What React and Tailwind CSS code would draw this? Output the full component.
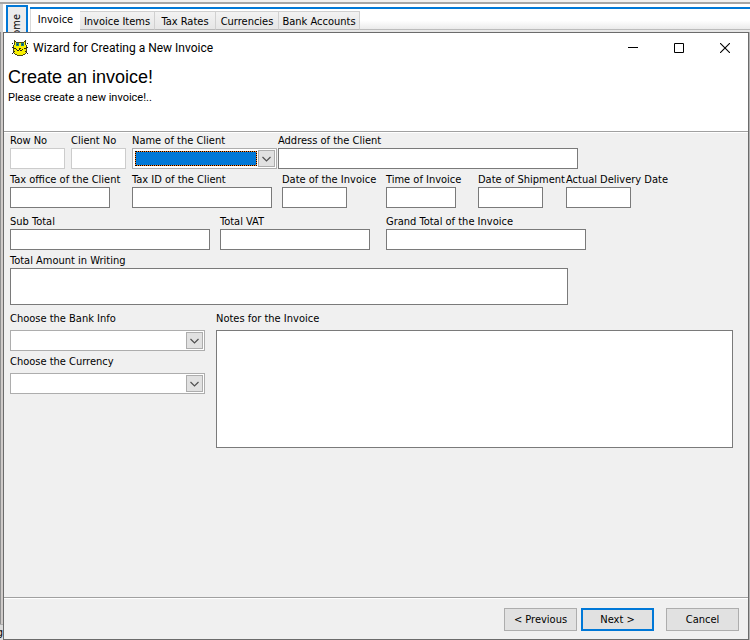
import { useState } from "react";

const tabs = ["Invoice Items", "Tax Rates", "Currencies", "Bank Accounts"];
const tabWidths = {
	"Invoice Items": "w-[75px]",
	"Tax Rates": "w-[61px]",
	Currencies: "w-[63px]",
	"Bank Accounts": "w-[81px]",
};

function CatIcon() {
	return (
		<svg width="16" height="16" viewBox="0 0 16 16" shapeRendering="crispEdges" aria-hidden="true">
			<path d="M2 0h1v1h1v1h8V1h1V0h1v5h1v8h-1v1h-1v1h-2v1H5v-1H3v-1H2v-1H1V5h1z" fill="#4a4a18" />
			<path d="M3 2h1v1h8V2h1v3h1v8h-1v1h-2v1H5v-1H3v-1H2V5h1z" fill="#f8f000" />
			<path d="M4 3h3v3H4zM9 3h3v3H9z" fill="#16808c" />
			<path d="M5 4h1v1H5zM10 4h1v1h-1z" fill="#0a3c50" />
			<path
				d="M0 3h1v1H0zM15 3h1v1h-1zM0 7h2v1H0zM2 8h2v1H2zM14 7h2v1h-2zM12 8h2v1h-2zM0 13h1v1H0zM1 12h1v1H1zM15 13h1v1h-1zM14 12h1v1h-1zM2 11h1v1H2zM13 11h1v1h-1zM7 8h2v1H7zM7 9h1v1H7zM5 10h2v1H5zM8 10h2v1H8zM10 9h1v1h-1zM4 9h1v1H4z"
				fill="#222"
			/>
		</svg>
	);
}

function Field({ id, label, width, disabled, value, onChange }) {
	return (
		<div>
			<label htmlFor={id} className="block h-[15px] leading-[15px] whitespace-nowrap">
				{label}
			</label>
			<input
				id={id}
				name={id}
				type="text"
				disabled={disabled}
				value={value || ""}
				onChange={onChange}
				className={`block h-[21px] max-w-full border bg-white px-1 outline-none ${width} ${
					disabled ? "border-[#cccccc]" : "border-[#7a7a7a]"
				}`}
			/>
		</div>
	);
}

function Combo({ id, label, width, labelGap, selected }) {
	return (
		<div>
			<label htmlFor={id} className={`block h-[15px] leading-[15px] whitespace-nowrap ${labelGap || ""}`}>
				{label}
			</label>
			<div className={`flex h-[21px] border border-[#adadad] bg-white p-px ${width}`}>
				<div className={`flex flex-1 ${selected ? "m-px bg-[#ff8728]" : ""}`}>
					<select
						id={id}
						name={id}
						className={`w-full appearance-none outline-none ${
							selected ? "border border-dotted border-black bg-[#0078d7] bg-clip-padding" : "bg-white"
						}`}
					>
						<option value=""></option>
					</select>
				</div>
				<span className="pointer-events-none flex w-[17px] items-center justify-center border border-[#adadad] bg-[#e1e1e1]">
					<svg width="9" height="6" viewBox="0 0 9 6" fill="none" stroke="#505050" strokeWidth="1.2">
						<path d="M0.5 1l4 4 4-4" />
					</svg>
				</span>
			</div>
		</div>
	);
}

export default function App() {
	const [formData, setFormData] = useState({});

	const handleChange = (e) => {
		setFormData({ ...formData, [e.target.name]: e.target.value });
	};

	const bind = (id) => ({ id, value: formData[id], onChange: handleChange });

	return (
		<div className="flex min-h-screen flex-col bg-[#b4b4b4] font-['DejaVu_Sans_Condensed','DejaVu_Sans',sans-serif] text-[11px] text-black">
			{/* main window behind the wizard */}
			<div className="flex h-8 flex-col overflow-hidden bg-[#f0f0f0]">
				<div className="mt-[2px] h-[2px] shrink-0 bg-[#a5a5a5]" />
				<div className="flex flex-1 border-l-[3px] border-[#cfcfcf] bg-white pt-px pl-[3px]">
					<button
						type="button"
						className="flex h-10 w-[22px] shrink-0 items-center justify-center border-2 border-[#0078d7] bg-[#ececec]"
					>
						<span className="mt-2 rotate-180 [writing-mode:vertical-rl]">Home</span>
					</button>
					<div className="mt-[2px] ml-[2px] flex flex-1 flex-col border-t-2 border-[#0078d7]">
						<nav className="flex h-[23px] items-start bg-linear-to-b from-white via-white to-[#e4e4e4]">
							<button type="button" className="h-[23px] w-[50px] border-l border-[#d9d9d9] bg-white pb-px">
								Invoice
							</button>
							{tabs.map((tab) => (
								<button
									key={tab}
									type="button"
									className={`mt-[2px] h-[19px] border-t border-r border-b border-[#d0d0d0] border-b-[#b8b8b8] bg-linear-to-b from-[#f2f2f2] to-[#e6e6e6] pt-[2px] whitespace-nowrap ${tabWidths[tab]}`}
								>
									{tab}
								</button>
							))}
							<div className="mt-5 h-px flex-1 bg-[#bcbcbc]" />
						</nav>
					</div>
				</div>
			</div>

			<div className="flex flex-1">
				<div className="flex w-[3px] flex-col overflow-hidden bg-[#dcdcdc]">
					<div className="flex-1 border-l border-[#8f8f8f] bg-[#cfcbc9]" />
					<div className="flex h-4 justify-end border-t border-[#b0b0b0] leading-4">g</div>
				</div>

				<section
					role="dialog"
					aria-labelledby="wizard-title"
					className="mr-px flex flex-1 flex-col border border-[#6b6b6b] bg-[#f0f0f0]"
				>
					<header className="h-[99px] border-b border-[#a0a0a0] bg-white">
						<div className="flex h-[30px] items-center">
							<div className="flex flex-1 items-center gap-[5px] pl-2">
								<CatIcon />
								<h1 id="wizard-title" className="font-[Roboto,sans-serif] text-[12px]">
									Wizard for Creating a New Invoice
								</h1>
							</div>
							<button type="button" aria-label="Minimize" className="flex h-full w-[46px] items-center justify-center">
								<svg width="10" height="10" shapeRendering="crispEdges">
									<path d="M0 4h10v1H0z" />
								</svg>
							</button>
							<button type="button" aria-label="Maximize" className="flex h-full w-[46px] items-center justify-center">
								<svg width="10" height="10" fill="none" stroke="#000">
									<path d="M0.5 0.5h9v9h-9z" />
								</svg>
							</button>
							<button type="button" aria-label="Close" className="flex h-full w-[46px] items-center justify-center">
								<svg width="10" height="10" fill="none" stroke="#000" strokeWidth="1.1">
									<path d="M0 0l10 10M10 0L0 10" />
								</svg>
							</button>
						</div>
						<div className="pt-1 pl-1">
							<h2 className="font-['Liberation_Sans',sans-serif] text-[18px] leading-5">Create an invoice!</h2>
							<p className="pt-px font-[Roboto,sans-serif] text-[11px] leading-5">Please create a new invoice!..</p>
						</div>
					</header>

					<form className="flex flex-1 flex-col border-t border-white" onSubmit={(e) => e.preventDefault()}>
						<div className="flex flex-1 flex-col pr-[15px] pl-[6px]">
							<div className="grid grid-cols-[61px_61px_146px_1fr]">
								<Field {...bind("rowNo")} label="Row No" width="w-[55px]" disabled />
								<Field {...bind("clientNo")} label="Client No" width="w-[55px]" disabled />
								<Combo id="clientName" label="Name of the Client" width="w-[145px]" selected />
								<Field {...bind("address")} label="Address of the Client" width="w-[300px]" />
							</div>
							<div className="mt-[3px] grid grid-cols-[122px_150px_104px_92px_88px_1fr]">
								<Field {...bind("taxOffice")} label="Tax office of the Client" width="w-[100px]" />
								<Field {...bind("taxId")} label="Tax ID of the Client" width="w-[140px]" />
								<Field {...bind("invoiceDate")} label="Date of the Invoice" width="w-[65px]" />
								<Field {...bind("invoiceTime")} label="Time of Invoice" width="w-[70px]" />
								<Field {...bind("shipmentDate")} label="Date of Shipment" width="w-[65px]" />
								<Field {...bind("deliveryDate")} label="Actual Delivery Date" width="w-[65px]" />
							</div>
							<div className="mt-[6px] grid grid-cols-[210px_166px_1fr]">
								<Field {...bind("subTotal")} label="Sub Total" width="w-[200px]" />
								<Field {...bind("totalVat")} label="Total VAT" width="w-[150px]" />
								<Field {...bind("grandTotal")} label="Grand Total of the Invoice" width="w-[200px]" />
							</div>
							<div className="mt-[3px]">
								<label htmlFor="amountText" className="block h-[15px] leading-[15px]">
									Total Amount in Writing
								</label>
								<textarea
									id="amountText"
									className="block h-[37px] w-[558px] max-w-full resize-none border border-[#7a7a7a] bg-white px-1 outline-none"
								/>
							</div>
							<div className="mt-[6px] flex gap-[11px]">
								<div className="flex flex-col gap-[3px]">
									<Combo id="bank" label="Choose the Bank Info" width="w-[195px]" labelGap="mb-1" />
									<Combo id="currency" label="Choose the Currency" width="w-[195px]" labelGap="mb-1" />
								</div>
								<div className="flex-1">
									<label htmlFor="notes" className="mb-1 block h-[15px] leading-[15px]">
										Notes for the Invoice
									</label>
									<textarea
										id="notes"
										className="block h-[118px] w-full resize-none border border-[#7a7a7a] bg-white px-1 outline-none"
									/>
								</div>
							</div>
						</div>

						<footer className="border-t border-[#a0a0a0]">
							<div className="flex justify-end border-t border-white pt-[9px] pr-[9px] pb-2">
								<button type="button" className="h-[23px] w-[73px] border border-[#adadad] bg-[#e1e1e1] pt-[2px]">
									&lt; Previous
								</button>
								<button
									type="submit"
									className="ml-1 h-[23px] w-[73px] border-2 border-[#0078d7] bg-[#e1e1e1] pt-[2px]"
								>
									Next &gt;
								</button>
								<button
									type="button"
									className="ml-3 h-[23px] w-[73px] border border-[#adadad] bg-[#e1e1e1] pt-[2px]"
								>
									Cancel
								</button>
							</div>
						</footer>
					</form>
				</section>
			</div>
		</div>
	);
}
